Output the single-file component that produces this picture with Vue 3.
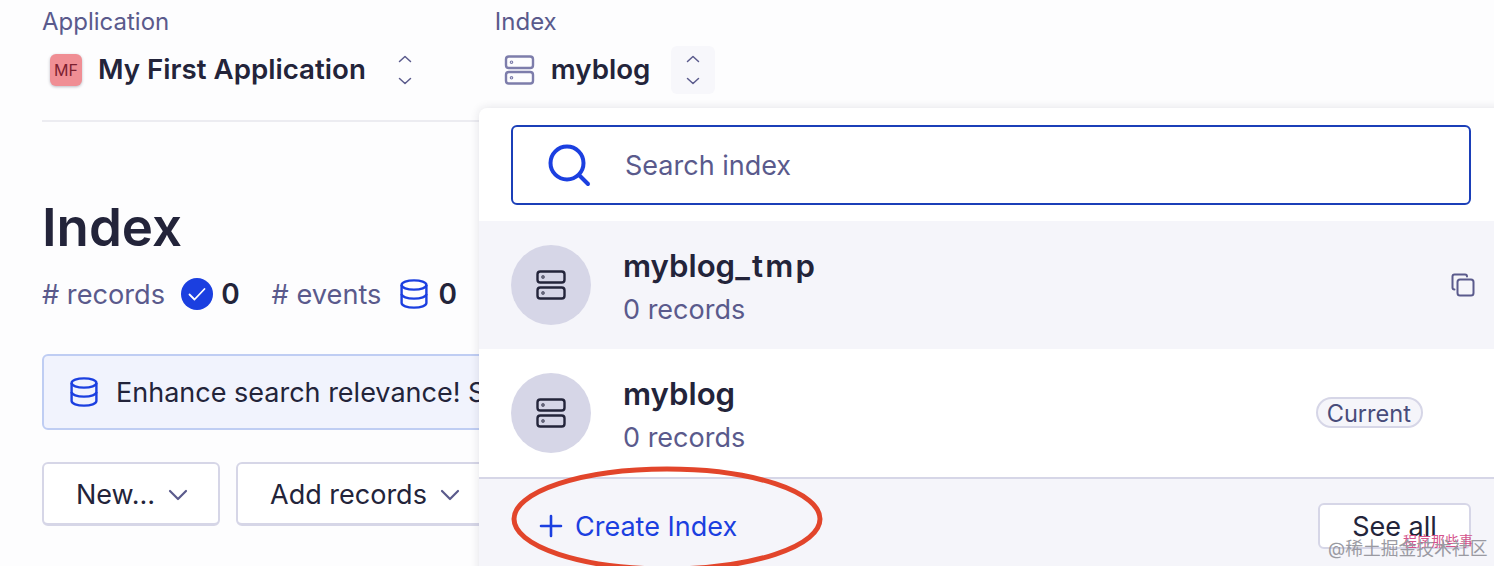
<script setup>
const indices = [
  { name: "myblog", suffix: "_tmp", records: "0 records", hovered: true },
  { name: "myblog", suffix: "", records: "0 records", current: true },
];
</script>

<template>
  <div class="page">
    <header class="topbar">
      <div class="selector app-selector">
        <div class="label">Application</div>
        <div class="value">
          <span class="avatar">MF</span>
          <span class="value-name">My First Application</span>
          <span class="updown">
            <svg width="16" height="30" viewBox="0 0 16 30" fill="none" stroke="#5a5a8c" stroke-width="1.5" stroke-linecap="round" stroke-linejoin="round">
              <path d="M2.5 6.5 8 1.5l5.5 5" />
              <path d="M2.5 23.5 8 28.5l5.5-5" />
            </svg>
          </span>
        </div>
      </div>
      <div class="selector index-selector">
        <div class="label">Index</div>
        <div class="value">
          <svg class="server-icon" width="32" height="32" viewBox="0 0 32 32" fill="none" stroke="#7d7dab" stroke-width="2.4">
            <rect x="2" y="2.5" width="27" height="11.5" rx="2.8" />
            <rect x="2" y="18" width="27" height="11.5" rx="2.8" />
            <circle cx="7.5" cy="8.2" r=".6" />
            <circle cx="7.5" cy="23.8" r=".6" />
          </svg>
          <span class="value-name">myblog</span>
          <span class="updown active">
            <svg width="16" height="30" viewBox="0 0 16 30" fill="none" stroke="#5a5a8c" stroke-width="1.5" stroke-linecap="round" stroke-linejoin="round">
              <path d="M2.5 6.5 8 1.5l5.5 5" />
              <path d="M2.5 23.5 8 28.5l5.5-5" />
            </svg>
          </span>
        </div>
      </div>
    </header>

    <main class="content">
      <h1>Index</h1>
      <div class="stats">
        <span class="stat-label"># records</span>
        <svg class="check" width="32" height="32" viewBox="0 0 32 32">
          <circle cx="16" cy="16" r="16" fill="#1b3fe0" />
          <path d="M8.500 16.500l5 5 10-10.500" fill="none" stroke="#fff" stroke-width="1.800" stroke-linecap="round" stroke-linejoin="round" />
        </svg>
        <b class="stat-num">0</b>
        <span class="stat-label events"># events</span>
        <svg class="db" width="28" height="30" viewBox="0 0 28 30" fill="none" stroke="#1b3fe0" stroke-width="2.4">
          <ellipse cx="14" cy="6" rx="12.4" ry="4.6" />
          <path d="M1.6 6v18c0 2.6 5.5 4.6 12.4 4.6s12.4-2 12.4-4.6V6" />
          <path d="M1.6 15c0 2.6 5.5 4.6 12.4 4.6s12.4-2 12.4-4.6" />
        </svg>
        <b class="stat-num">0</b>
      </div>

      <div class="banner">
        <svg width="28" height="30" viewBox="0 0 28 30" fill="none" stroke="#1b3fe0" stroke-width="2.4">
          <ellipse cx="14" cy="6" rx="12.4" ry="4.6" />
          <path d="M1.6 6v18c0 2.6 5.5 4.6 12.4 4.6s12.4-2 12.4-4.6V6" />
          <path d="M1.6 15c0 2.6 5.5 4.6 12.4 4.6s12.4-2 12.4-4.6" />
        </svg>
        <span>Enhance search relevance! See how to configure your index</span>
      </div>

      <div class="actions">
        <button class="btn">
          New…
          <svg width="20" height="12" viewBox="0 0 20 12" fill="none" stroke="#5a5a8c" stroke-width="2.2" stroke-linecap="round" stroke-linejoin="round"><path d="M2 2l8 8 8-8" /></svg>
        </button>
        <button class="btn">
          Add records
          <svg width="20" height="12" viewBox="0 0 20 12" fill="none" stroke="#5a5a8c" stroke-width="2.2" stroke-linecap="round" stroke-linejoin="round"><path d="M2 2l8 8 8-8" /></svg>
        </button>
      </div>
    </main>

    <section class="popover">
      <div class="search-wrap">
        <div class="search">
          <svg width="44" height="44" viewBox="0 0 44 44" fill="none" stroke="#1b3fe0" stroke-width="4" stroke-linecap="round">
            <circle cx="20" cy="20" r="16.500" />
            <path d="M32.500 32.500 41 41" />
          </svg>
          <span>Search index</span>
        </div>
      </div>
      <ul class="list">
        <li v-for="item in indices" :key="item.name + item.suffix" class="row" :class="{ hovered: item.hovered }">
          <span class="circle">
            <svg width="30" height="30" viewBox="0 0 30 30" fill="none" stroke="#23243a" stroke-width="2.4">
              <rect x="1.500" y="1.500" width="27" height="11" rx="2.800" />
              <rect x="1.500" y="17.500" width="27" height="11" rx="2.800" />
              <circle cx="7" cy="7" r=".5" />
              <circle cx="7" cy="23" r=".5" />
            </svg>
          </span>
          <div class="row-text">
            <div class="row-name">{{ item.name }}<span class="suffix">{{ item.suffix }}</span></div>
            <div class="row-sub">{{ item.records }}</div>
          </div>
          <span v-if="item.current" class="pill">Current</span>
          <svg v-if="item.hovered" class="copy" width="24" height="24" viewBox="0 0 24 24" fill="none" stroke="#5a5a8c" stroke-width="2" stroke-linejoin="round" stroke-linecap="round">
            <rect x="6.500" y="6.500" width="16" height="16" rx="2.500" />
            <path d="M3.500 16.500c-1.200 0-2-.8-2-2V3.500c0-1.200.8-2 2-2h10.500c1.200 0 2 .8 2 2" />
          </svg>
        </li>
      </ul>
      <footer class="pop-footer">
        <span class="create">
          <svg width="24" height="24" viewBox="0 0 24 24" fill="none" stroke="#1b3fe0" stroke-width="2.600" stroke-linecap="round"><path d="M12 2v20M2 12h20" /></svg>
          Create Index
        </span>
        <button class="see-all">See all</button>
      </footer>
    </section>

    <svg class="ring" width="320" height="112" viewBox="0 0 320 112" fill="none">
      <ellipse cx="160" cy="57" rx="153" ry="50" stroke="#e2452b" stroke-width="5" />
    </svg>
    <span class="mark-pink">程序那些事</span>
    <span class="mark-gray">@稀土掘金技术社区</span>
  </div>
</template>

<style>
body {
  margin: 0;
  background: #fdfdfe;
}
</style>

<style scoped>
.page {
  position: relative;
  width: 1494px;
  height: 566px;
  overflow: hidden;
  background: #fdfdfe;
  font-family: Inter, "Noto Sans CJK SC", sans-serif;
  color: #23243a;
}

.topbar {
  display: flex;
  gap: 68px;
  width: 437px;
  height: 112px;
  margin-left: 42px;
  padding-top: 8px;
  border-bottom: 2px solid #ececf1;
}

.selector {
  flex: none;
}

.label {
  font-size: 24px;
  line-height: 28px;
  color: #5a5a8c;
}

.value {
  display: flex;
  align-items: center;
  margin-top: 10px;
  height: 48px;
}

.value-name {
  margin-bottom: 2px;
  font-size: 27.7px;
  font-weight: 600;
}

.avatar {
  display: flex;
  align-items: center;
  justify-content: center;
  width: 32px;
  height: 32px;
  margin: 0 16px 0 8px;
  background: #f08e94;
  border-radius: 6px;
  box-shadow: 0 1px 3px rgba(35, 36, 58, .3);
  font-size: 16px;
  color: #7c2030;
}

.updown {
  display: flex;
  align-items: center;
  justify-content: center;
  width: 44px;
  height: 48px;
  margin-left: 17px;
  border-radius: 6px;
}

.updown.active {
  background: #f7f7fb;
  margin-left: 21px;
}

.server-icon {
  margin: 0 15px 0 9px;
}

.content {
  margin-left: 42px;
  width: 1000px;
}

h1 {
  margin: 75px 0 0;
  font-size: 52.8px;
  line-height: 60px;
  font-weight: 600;
}

.stats {
  display: flex;
  align-items: center;
  height: 36px;
  margin-top: 19px;
  font-size: 28px;
}

.stat-label {
  color: #5a5a8c;
  font-size: 27.2px;
}

.stat-num {
  font-weight: 600;
}

.check {
  margin: 0 8px 0 16px;
}

.events {
  margin-left: 32px;
}

.db {
  margin: 0 10px 0 19px;
}

.banner {
  display: flex;
  align-items: center;
  gap: 18px;
  height: 76px;
  margin-top: 42px;
  padding-left: 26px;
  box-sizing: border-box;
  background: #f1f3fd;
  border: 2px solid #bfcdf3;
  border-radius: 6px;
  font-size: 27px;
  white-space: nowrap;
}

.actions {
  display: flex;
  gap: 16px;
  margin-top: 32px;
}

.btn {
  display: flex;
  align-items: center;
  gap: 13px;
  height: 64px;
  padding: 2px 30px 0 32px;
  background: #fff;
  border: 2px solid #d6d6e7;
  border-bottom-width: 3px;
  border-radius: 6px;
  font: inherit;
  font-size: 27px;
  color: #23243a;
}

.popover {
  position: absolute;
  left: 479px;
  top: 108px;
  width: 1100px;
  height: 470px;
  background: #fff;
  border-radius: 8px 0 0 0;
  box-shadow: 0 0 10px rgba(35, 36, 58, .12);
}

.search-wrap {
  width: 1015px;
  padding: 17px 0 16px;
}

.search {
  display: flex;
  align-items: center;
  height: 80px;
  box-sizing: border-box;
  width: 960px;
  margin-left: 32px;
  padding-left: 34px;
  border: 2px solid #1b3fb8;
  border-radius: 6px;
  font-size: 27px;
  color: #5a5a8c;
}

.search span {
  margin-left: 34px;
}

.list {
  margin: 0;
  padding: 0;
  list-style: none;
  width: 1015px;
}

.row {
  position: relative;
  display: flex;
  align-items: center;
  height: 128px;
  padding-left: 32px;
  box-sizing: border-box;
}

.row.hovered {
  background: #f5f5fa;
}

.circle {
  display: flex;
  align-items: center;
  justify-content: center;
  width: 80px;
  height: 80px;
  border-radius: 50%;
  background: #d6d6e7;
}

.row-text {
  margin-left: 32px;
  flex: 1;
  padding-top: 4px;
}

.row-name {
  font-size: 31.2px;
  font-weight: 600;
  line-height: 42px;
}

.suffix {
  letter-spacing: 2.2px;
}

.row-sub {
  margin-top: 3px;
  font-size: 27px;
  line-height: 40px;
  color: #5a5a8c;
}

.pill {
  margin: 0 71px 2px 0;
  padding: 0 10px 0 9px;
  height: 31px;
  line-height: 29px;
  box-sizing: border-box;
  background: #f5f5fa;
  border: 2px solid #d6d6e7;
  border-radius: 16px;
  font-size: 23.6px;
  color: #484c7a;
}

.copy {
  margin-right: 19px;
}

.pop-footer {
  display: flex;
  align-items: flex-start;
  justify-content: space-between;
  width: 1015px;
  box-sizing: border-box;
  height: 120px;
  padding: 24px 23px 0 60px;
  background: #f5f5fa;
  border-top: 2px solid #d6d6e7;
}

.create {
  display: flex;
  align-items: center;
  gap: 12px;
  height: 46px;
  font-size: 27px;
  color: #1b3fe0;
}

.see-all {
  width: 153px;
  height: 46px;
  background: #fff;
  border: 2px solid #d6d6e7;
  border-radius: 6px;
  font: inherit;
  font-size: 27px;
  color: #23243a;
}

.ring {
  position: absolute;
  left: 507px;
  top: 462px;
}

.mark-pink {
  position: absolute;
  left: 1403px;
  top: 531px;
  font-family: "Noto Sans CJK SC", sans-serif;
  font-size: 14px;
  line-height: 18px;
  color: #d4548c;
}

.mark-gray {
  position: absolute;
  left: 1328px;
  top: 537px;
  font-size: 17.8px;
  line-height: 24px;
  color: #9a9aa2;
}
</style>
